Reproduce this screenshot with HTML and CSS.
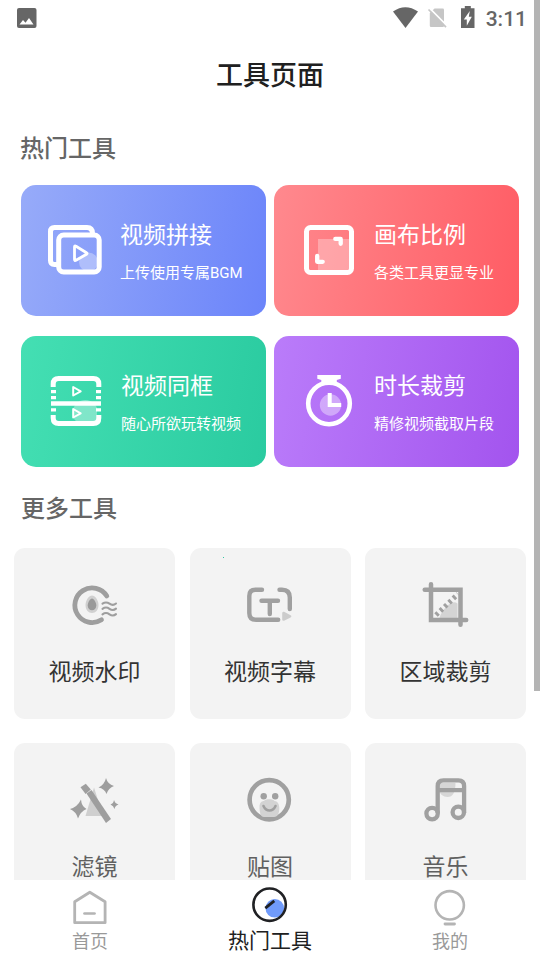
FILE: index.html
```html
<!DOCTYPE html>
<html lang="zh-CN">
<head>
<meta charset="utf-8">
<meta name="viewport" content="width=device-width, initial-scale=1">
<title>工具页面</title>
<link rel="stylesheet" href="styles.css">
</head>
<body>
<div class="app">
  <header class="status">
    <svg class="status-photo" viewBox="17 8 20 20"><rect x="17" y="8" width="19.500" height="20" rx="2" fill="#666"/><path d="M19.500 24.500 23 20l2.500 2.700L29 18l4.500 6.500z" fill="#fff"/></svg>
    <div class="status-right">
      <svg class="status-icons" viewBox="392 5 90 26">
        <path d="M393 11.500Q405.300 3 418 11.500L405.500 28z" fill="#666"/>
        <path d="M434.500 8.500h8.300q1.200 0 1.200 1.200V26q0 1-1.200 1H431q-1.200 0-1.200-1.200V13z" fill="#c6c6c6"/>
        <path d="M430.200 8.900l17.500 17.700" stroke="#fff" stroke-width="2"/>
        <path d="M428.500 9.500l17.500 17.700" stroke="#c6c6c6" stroke-width="1.700"/>
        <path d="M461 8.200h3.800V6h6v2.200h3.700V28H461z" fill="#666"/>
        <path d="M469.800 11l-6 8.500h3v6.200l5-9h-3z" fill="#fff"/>
      </svg>
      <span class="time">3:11</span>
    </div>
  </header>
  <h1 class="title">工具页面</h1>

  <main class="content">
    <h2 class="section-title">热门工具</h2>
    <div class="hot">
      <a class="card blue">
        <svg viewBox="45 220 60 60" fill="none" stroke="#fff">
          <circle cx="88.500" cy="262" r="9.500" fill="#fff" fill-opacity=".32" stroke="none"/>
          <path d="M57.500 264.500h-3q-4 0-4-4v-29q0-4 4-4H87q5.500 0 5.500 6" stroke-width="5"/>
          <rect x="58.700" y="235" width="40.500" height="37" rx="5" stroke-width="5"/>
          <path d="M74.500 247v12.500q0 1.500 1.500.8l10.500-6q1.300-.8 0-1.600L76 246.200q-1.500-.7-1.500.8z" stroke-width="2.800" stroke-linejoin="round"/>
        </svg>
        <div class="card-text"><b>视频拼接</b><span>上传使用专属BGM</span></div>
      </a>
      <a class="card red">
        <svg viewBox="298 220 60 60" fill="none" stroke="#fff">
          <path d="M318 239h33v33h-33z" fill="#fff" fill-opacity=".3" stroke="none"/>
          <rect x="306.500" y="227.500" width="45" height="45" rx="4" stroke-width="5"/>
          <path d="M335.300 238.900h5.400v4.900M317.200 256v5.800h5.500" stroke-width="4.300" stroke-linejoin="round" stroke-linecap="round"/>
        </svg>
        <div class="card-text"><b>画布比例</b><span>各类工具更显专业</span></div>
      </a>
      <a class="card green">
        <svg viewBox="45 371 60 60" fill="none" stroke="#fff">
          <path d="M73.500 417a12 12 0 0 1 23.500-9v14H81q-7 0-7.500-5z" fill="#fff" fill-opacity=".35" stroke="none"/>
          <path d="M53.200 387v-3q0-5.500 5.500-5.500h34.600q5.500 0 5.500 5.500v3M53.200 415v3q0 5.500 5.500 5.500h34.600q5.500 0 5.500-5.500v-3" stroke-width="5"/>
          <path d="M51 403.500h50" stroke-width="4.600"/>
          <path d="M51 391.700h5M51 397.700h5M51 409.800h5M96 391.700h5M96 397.700h5M96 409.800h5" stroke-width="3.200"/>
          <path d="M73.200 387v8.500l7.500-4.200zM73.200 409v8.500l7.500-4.200z" stroke-width="2" stroke-linejoin="round"/>
        </svg>
        <div class="card-text"><b>视频同框</b><span>随心所欲玩转视频</span></div>
      </a>
      <a class="card purple">
        <svg viewBox="298 371 60 60" fill="none" stroke="#fff">
          <circle cx="330.500" cy="405" r="10.700" fill="#fff" fill-opacity=".38" stroke="none"/>
          <circle cx="329" cy="403.500" r="20.800" stroke-width="4.600"/>
          <path d="M317.300 375h23.500v3.800l-4 1.200v4h-15.500v-4l-4-1.200z" fill="#fff" stroke="none"/>
          <path d="M329.700 393v12h11.500" stroke-width="4"/>
        </svg>
        <div class="card-text"><b>时长裁剪</b><span>精修视频截取片段</span></div>
      </a>
    </div>

    <h2 class="section-title more-title">更多工具</h2>
    <div class="more">
      <a class="tile">
        <svg viewBox="65.500 575 60 60" fill="none" stroke="#9e9e9e" stroke-linecap="round">
          <path d="M107.300 596A17.300 17.300 0 1 0 102 619.800" stroke-width="4.800"/>
          <path d="M92.500 595.500c3 0 6.500 5 6.500 9.500 0 5-3 8-6.500 8s-6.500-3-6.500-8c0-4.500 3.500-9.500 6.500-9.500z" fill="#d0d0d0" stroke="none"/>
          <path d="M92.500 598.500c2 0 4.300 4 4.300 7 0 3-2 4.800-4.300 4.800s-4.300-1.800-4.300-4.800c0-3 2.300-7 4.300-7z" fill="#999" stroke="none"/>
          <path d="M103 603.700q3.500-2.500 7 0t6.500-.2M103 608.800q3.500-2.500 7 0t6.500-.2M103 614.300q3.500-2.500 7 0t6.500-.2" stroke-width="2.100"/>
        </svg>
        <span>视频水印</span>
      </a>
      <a class="tile">
        <svg viewBox="240.500 575 60 60" fill="none" stroke="#a0a0a0" stroke-linecap="round" stroke-width="4.400">
          <path d="M262.500 589.700h-6.500q-6.200 0-6.200 6.200v17q0 6.900 6.900 6.900h22M280 589.700h2.500q7.800 0 7.800 7.800V609"/>
          <path d="M262 600.700h16.500M270.300 601v13"/>
          <path d="M284 613v6.500l6.500-3.100z" fill="#ccc" stroke="#ccc" stroke-width="2.600" stroke-linejoin="round"/>
        </svg>
        <span>视频字幕</span>
        <i class="dot"></i>
      </a>
      <a class="tile">
        <svg viewBox="415.500 575 60 60" fill="none" stroke="#a0a0a0" stroke-linecap="round">
          <path d="M439 618q2-7 8-12.500t10-2v15z" fill="#d4d4d4" stroke="none"/>
          <path d="M424.200 589.700H460V624.800M430.500 584.300v35.800h35.200" stroke-width="4.500"/>
          <path d="M435.500 615L457.500 594" stroke-width="5" stroke-dasharray="2.900 3.100" stroke-linecap="butt"/>
        </svg>
        <span>区域裁剪</span>
      </a>
      <a class="tile fade">
        <svg viewBox="64.500 770 60 60">
          <path d="M93.500 787.500l9 28.500H85z" fill="#cfcfcf"/>
          <path d="M86 793.500l5-3.500 19.500 29-5 4z" fill="#9e9e9e"/>
          <path d="M80 787.300l5.300-3.500 5 5.700-5.200 4.500z" fill="#9e9e9e"/>
          <path d="M105.500 778q1.500 6 8 8-5.500 1.800-7.500 8-2-5.500-8-6.500 6-2.800 7.500-9.500zM80.500 799.500q.5 7 5.500 9.500-6 2.500-8.500 9.500-1.500-6.500-8-9.500 7.500-2 11-9.500zM113.500 800q1 3.500 4.500 4.500-3.500 1-4 4.500-1-3.500-4-4.500 3-1 3.500-4.500z" fill="#9e9e9e"/>
        </svg>
        <span>滤镜</span>
      </a>
      <a class="tile fade">
        <svg viewBox="240.500 770 60 60" fill="none" stroke="#a0a0a0">
          <circle cx="269.700" cy="799.700" r="19.600" stroke-width="4.700"/>
          <path d="M260 807c0-4 2-6 4.500-6 1-2.500 9.500-2.500 10.500 0 3 0 4.800 3 4.800 7 0 5-1.300 9-5.300 9H264.500c-3.500 0-4.500-5-4.500-10z" fill="#d3d3d3" stroke="none"/>
          <circle cx="264.200" cy="796.200" r="3.200" fill="#a0a0a0" stroke="none"/><circle cx="275.700" cy="796.200" r="3.200" fill="#a0a0a0" stroke="none"/>
          <path d="M264 806q2 4.500 6 4.500t6-4.500" stroke-width="2.600" stroke-linecap="round"/>
        </svg>
        <span>贴图</span>
      </a>
      <a class="tile fade">
        <svg viewBox="415.500 770 60 60" fill="none" stroke="#a0a0a0" stroke-width="4.300">
          <path d="M438 783h17q0 14-8 14-6.500 0-9-7z" fill="#d6d6d6" stroke="none"/>
          <path d="M437.200 813v-27q0-5.700 5.700-5.700h15q5.700 0 5.700 5.700v27M437 790.200h26.500"/>
          <circle cx="431.600" cy="813.600" r="5.700"/><circle cx="457.800" cy="812.300" r="5.700"/>
        </svg>
        <span>音乐</span>
      </a>
    </div>
  </main>

  <nav class="nav">
    <a class="nav-item">
      <svg viewBox="69 886.500 42 42" fill="none" stroke="#b4b4b4"><path d="M74.700 923.200v-21L89.800 892.700l15.300 9.500v21z" stroke-width="2.800" stroke-linejoin="round"/><path d="M84.500 914h10" stroke-width="2.700" stroke-linecap="round"/></svg>
      <span>首页</span>
    </a>
    <a class="nav-item active">
      <svg viewBox="249 884 42 42" fill="none"><circle cx="274.800" cy="908.300" r="9.300" fill="#709bfb"/><circle cx="269.600" cy="904.700" r="16.200" stroke="#202124" stroke-width="2.600"/><path d="M265.300 908.200l9-7.300" stroke="#202124" stroke-width="2.800"/></svg>
      <span>热门工具</span>
    </a>
    <a class="nav-item">
      <svg viewBox="429 886 42 42" fill="none" stroke="#b4b4b4"><circle cx="449.700" cy="905.300" r="14.200" stroke-width="2.600"/><path d="M445 924h9.500" stroke-width="2.800" stroke-linecap="round"/></svg>
      <span>我的</span>
    </a>
  </nav>
  <div class="scrollbar"></div>
</div>
</body>
</html>
```
FILE: styles.css
```css
* { box-sizing: border-box; }

body {
  margin: 0;
  background: #fff;
  font-family: Roboto, "Noto Sans CJK SC", sans-serif;
}

.app {
  position: relative;
  display: flex;
  flex-direction: column;
  height: 960px;
  overflow: hidden;
}

svg { display: block; flex: none; }

.status {
  display: flex;
  justify-content: space-between;
  align-items: center;
  height: 36px;
  padding: 0 13px 0 17px;
  flex: none;
}
.status-photo { width: 20px; height: 20px; }
.status-right { display: flex; align-items: center; gap: 4px; }
.status-icons { width: 90px; height: 26px; }
.time { padding-top: 2px; font-size: 21px; font-weight: 500; line-height: 26px; color: #666; }

.title {
  margin: 0;
  height: 78px;
  font-size: 27px;
  font-weight: 500;
  line-height: 80px;
  text-align: center;
  color: #202020;
  flex: none;
}

.content { flex: 1; min-height: 0; overflow: hidden; }

.section-title {
  margin: 0;
  padding-left: 20px;
  height: 71px;
  font-size: 24px;
  font-weight: 500;
  line-height: 70px;
  color: #666;
}
.more-title { padding-left: 21px; height: 81px; line-height: 85px; }

.hot {
  display: grid;
  grid-template-columns: 245px 245px;
  gap: 20px 8px;
  padding-left: 21px;
}
.card {
  display: flex;
  align-items: flex-start;
  gap: 16px;
  height: 131px;
  padding: 35px 0 0 24px;
  border-radius: 15px;
  color: #fff;
}
.card.blue { gap: 15px; }
.card svg { width: 60px; height: 60px; }
.card-text { display: flex; flex-direction: column; gap: 12px; padding-top: 1px; white-space: nowrap; }
.card-text b { font-size: 23px; font-weight: 400; line-height: 30px; }
.card-text span { font-size: 15px; line-height: 20px; }
.blue { background: linear-gradient(100deg, #97abf9, #6b84fa); }
.red { background: linear-gradient(100deg, #ff898e, #ff5c64); }
.green { background: linear-gradient(100deg, #44dfb3, #2acba0); }
.purple { background: linear-gradient(100deg, #ba7cfa, #a354ee); }

.more {
  display: grid;
  grid-template-columns: repeat(3, 161px);
  gap: 24px 14.5px;
  padding-left: 14px;
}
.tile {
  position: relative;
  display: flex;
  flex-direction: column;
  align-items: center;
  gap: 23px;
  height: 171px;
  padding-top: 27px;
  border-radius: 11px;
  background: #f3f3f3;
  color: #333;
}
.tile svg { width: 60px; height: 60px; }
.tile span { font-size: 23px; line-height: 30px; }
.fade { color: #606060; }
.dot {
  position: absolute;
  left: 33px;
  top: 9px;
  width: 1px;
  height: 1px;
  background: #35c7a4;
}

.nav {
  display: grid;
  grid-template-columns: repeat(3, 180px);
  height: 80px;
  background: #fff;
  flex: none;
}
.nav-item {
  display: flex;
  flex-direction: column;
  align-items: center;
  gap: 2px;
  padding-top: 6px;
  font-size: 18px;
  line-height: 24px;
  color: #999;
}
.nav-item svg { width: 42px; height: 42px; }
.nav-item.active { padding-top: 4px; gap: 3px; font-size: 21px; color: #202020; }

.scrollbar {
  position: absolute;
  top: 0;
  right: 0;
  width: 6px;
  height: 691px;
  background: #b4b4b4;
}
```
